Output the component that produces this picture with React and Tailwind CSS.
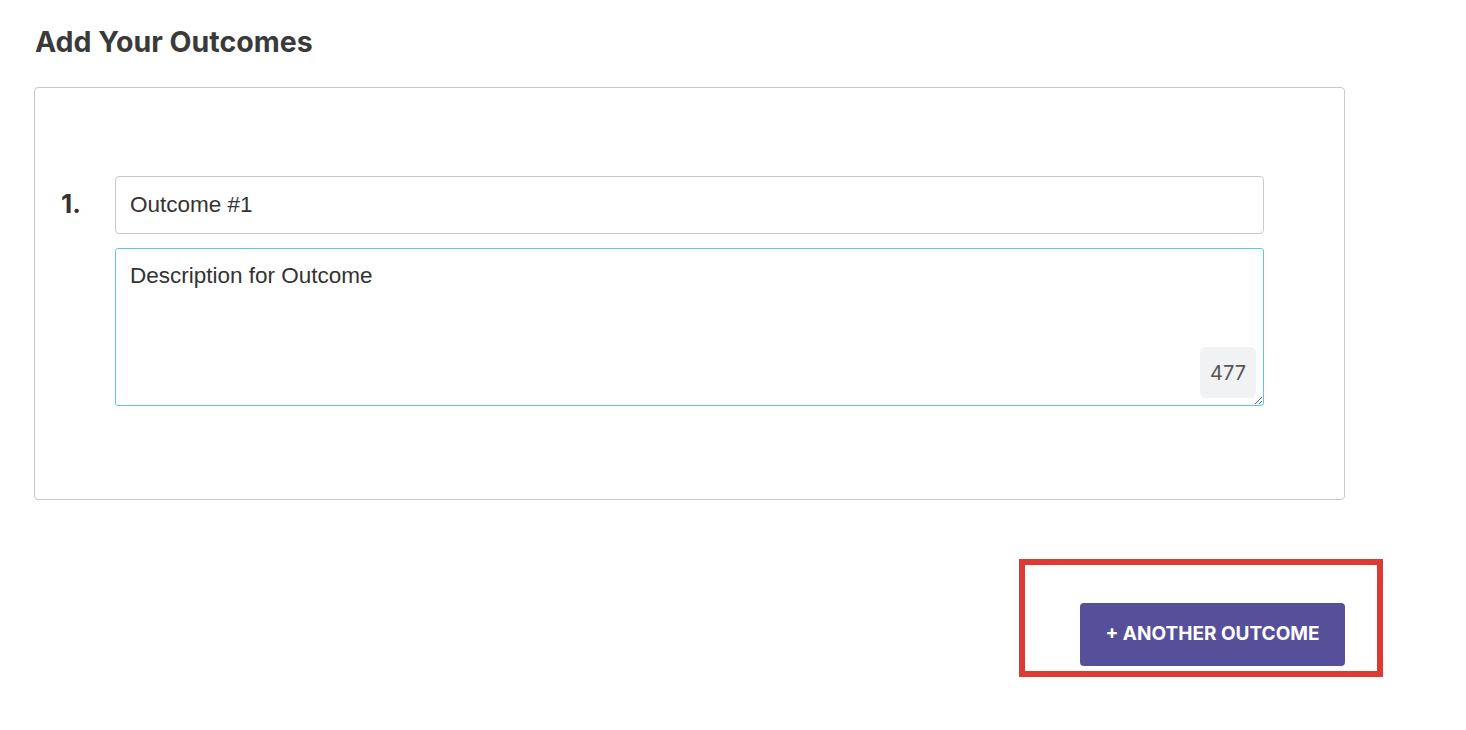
import React, { useState } from "react";

const MAX = 500;

const App = () => {
  const [title, setTitle] = useState("Outcome #1");
  const [desc, setDesc] = useState("Description for Outcome");

  return (
    <div className="w-[1466px] h-[730px] bg-white font-['Inter',sans-serif] text-[#333]">
      <div className="pl-[34px] pr-[121px] pt-[23px]">
        <h2 className="text-[28.5px] font-bold leading-[38px] text-[#3a3a3a] pl-[1px]">
          Add Your Outcomes
        </h2>

        <div className="mt-[26px] border border-[#c4c9d2] rounded-[4px] pt-[88px] pb-[93px] pl-[26px] pr-[80px]">
          <div className="flex">
            <div className="w-[54px] shrink-0 pt-[11px] text-[26px] font-bold leading-[34px] text-[#333]">
              1.
            </div>
            <div className="flex-1 flex flex-col gap-[14px]">
              <input
                type="text"
                value={title}
                onChange={(e) => setTitle(e.target.value)}
                className="h-[58px] w-full border border-[#c4c9d2] rounded-[4px] px-[14px] text-[22.5px] text-[#333] font-['Liberation_Sans',Arial,sans-serif] outline-none"
              />
              <div className="relative">
                <textarea
                  value={desc}
                  maxLength={MAX}
                  onChange={(e) => setDesc(e.target.value)}
                  className="block h-[158px] w-full border border-[#5ecad6] rounded-[3px] px-[14px] py-[13px] text-[22.5px] leading-[28px] text-[#333] font-['Liberation_Sans',Arial,sans-serif] outline-none resize-y"
                />
                <span className="absolute right-[8px] bottom-[8px] w-[56px] h-[51px] flex items-center justify-center rounded-[6px] bg-[#f1f2f4] text-[20px] text-[#555] font-['Inter',sans-serif]">
                  {MAX - desc.length}
                </span>
              </div>
            </div>
          </div>
        </div>

        <div className="flex justify-end mt-[103px]">
          <div className="relative">
            <button className="h-[63px] w-[265px] rounded-[4px] bg-[#56509a] text-white text-[19px] font-bold uppercase">
              + Another Outcome
            </button>
            <div className="absolute left-[-61px] right-[-38px] top-[-44px] bottom-[-11px] border-[6px] border-[#dc3a33] pointer-events-none"></div>
          </div>
        </div>
      </div>
    </div>
  );
};

export default App;
